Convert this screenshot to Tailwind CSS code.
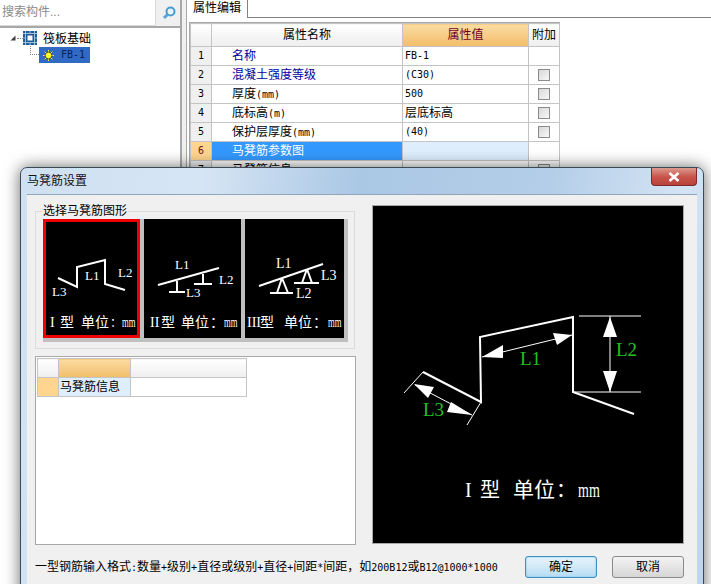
<!DOCTYPE html>
<html>
  <head>
    <meta charset="UTF-8" />
    <title>马凳筋设置</title>
    <script src="https://cdn.jsdelivr.net/npm/@tailwindcss/browser@4"></script>
  </head>
  <body class="bg-white">
    <div class="relative w-[711px] h-[584px] overflow-hidden flex bg-white text-black text-[12px] leading-[18px] font-['Liberation_Sans','Noto_Sans_CJK_SC',sans-serif]">
      <!-- left tree -->
      <aside class="w-[180px] shrink-0 flex flex-col">
        <div class="h-[28px] flex border-b-2 border-[#a8a8a8] bg-[#f0f0f0]">
          <div class="w-[156px] h-[26px] bg-white border-r border-b border-[#d8d8d8] pl-[2px] text-[12px] leading-[25px] text-[#8a8a8a]">搜索构件...</div>
          <div class="flex-1 flex items-center justify-center pl-[1px]">
            <svg width="14" height="14" viewBox="0 0 14 14">
              <circle cx="8.5" cy="5.5" r="4" fill="#e8f4fb" stroke="#4a9bd0" stroke-width="2" />
              <path d="M5.5 8.5 L2 12" stroke="#5aa5d8" stroke-width="3" />
            </svg>
          </div>
        </div>
        <div class="relative flex-1">
          <div class="flex items-center h-[18px] mt-[1px] pl-[10px]">
            <svg width="6" height="6" viewBox="0 0 6 6"><path d="M5.5 0.5 V5.5 H0.5 Z" fill="#404040" /></svg>
            <span class="w-[6px] ml-[1px] border-t border-dotted border-[#808080]"></span>
            <svg width="14" height="14" viewBox="0 0 14 14">
              <rect width="14" height="14" fill="#1f5b95" />
              <path d="M0 2.5 H14 M0 11.5 H14 M2.5 0 V14 M11.5 0 V14 M7 0 V2 M7 12 V14 M0 7 H2 M12 7 H14" stroke="#9cc0e0" stroke-width="1" />
              <rect x="4" y="4" width="6" height="6" fill="#ffffff" stroke="#1f5b95" />
            </svg>
            <span class="ml-[6px] font-['Noto_Sans_CJK_SC',sans-serif]">筏板基础</span>
          </div>
          <div class="flex items-center h-[16px] ml-[30px]">
            <span class="w-[9px] h-[9px] -mt-[9px] border-l border-b border-dotted border-[#808080]"></span>
            <div class="w-[51px] h-[16px] ml-0 bg-[#316ac5] flex items-center pl-[4px]">
              <svg width="11" height="11" viewBox="0 0 11 11">
                <path d="M5.5 0 V11 M0 5.5 H11 M1.6 1.6 L9.4 9.4 M9.4 1.6 L1.6 9.4" stroke="#f6f030" stroke-width="1" />
                <circle cx="5.5" cy="5.5" r="3.4" fill="#ffff30" stroke="#4a4a20" stroke-width="1" />
              </svg>
              <span class="ml-[7px] -mt-[1px] font-['DejaVu_Sans_Mono',monospace] text-[10px] text-[#0a1f60]">FB-1</span>
            </div>
          </div>
        </div>
      </aside>

      <!-- splitter -->
      <div class="w-[7px] shrink-0 border-l-2 border-r border-[#a8a8a8] bg-[#f0f0f0]"></div>

      <!-- property editor -->
      <main class="flex-1 min-w-0">
        <div class="h-[18px] flex">
          <div class="w-[61px] h-[18px] border-r border-[#808080] bg-white pl-[6px] leading-[16px]">属性编辑</div>
          <div class="flex-1 border-b border-[#808080]"></div>
        </div>
        <div class="ml-[2px] mt-[4px] w-[371px] border-t border-l border-[#a8a8a8]">
          <table class="table-fixed border-collapse w-[369px] leading-[14px]">
            <colgroup>
              <col class="w-[21px]" />
              <col class="w-[191px]" />
              <col class="w-[126px]" />
              <col class="w-[31px]" />
            </colgroup>
            <tr class="h-[23px] text-center">
              <td class="border border-[#c4c4c4] bg-linear-to-b from-white to-[#eeeeee]"></td>
              <td class="border border-[#c4c4c4] bg-linear-to-b from-white to-[#eeeeee]">属性名称</td>
              <td class="border border-[#c4c4c4] bg-linear-to-b from-[#fbdca2] to-[#f2bd68] text-[#6a0030]">属性值</td>
              <td class="border border-[#c4c4c4] bg-linear-to-b from-white to-[#eeeeee]">附加</td>
            </tr>
            <tr class="h-[19px]">
              <td class="border border-[#c4c4c4] bg-[#f0f0f0] text-center font-['DejaVu_Sans_Mono',monospace] text-[10px]">1</td>
              <td class="border border-[#c4c4c4] pl-[20px] text-[#0000a0]">名称</td>
              <td class="border border-[#c4c4c4] pl-[2px] font-['DejaVu_Sans_Mono',monospace] text-[10px]">FB-1</td>
              <td class="border border-[#c4c4c4]"></td>
            </tr>
            <tr class="h-[19px]">
              <td class="border border-[#c4c4c4] bg-[#f0f0f0] text-center font-['DejaVu_Sans_Mono',monospace] text-[10px]">2</td>
              <td class="border border-[#c4c4c4] pl-[20px] text-[#0000a0]">混凝土强度等级</td>
              <td class="border border-[#c4c4c4] pl-[2px] font-['DejaVu_Sans_Mono',monospace] text-[10px]">(C30)</td>
              <td class="border border-[#c4c4c4]"><div class="w-[12px] h-[12px] mx-auto border border-[#8a8a8a] bg-linear-to-br from-[#d8d8d8] to-[#f8f8f8]"></div></td>
            </tr>
            <tr class="h-[19px]">
              <td class="border border-[#c4c4c4] bg-[#f0f0f0] text-center font-['DejaVu_Sans_Mono',monospace] text-[10px]">3</td>
              <td class="border border-[#c4c4c4] pl-[20px]">厚度<span class="font-['DejaVu_Sans_Mono',monospace] text-[10px]">(mm)</span></td>
              <td class="border border-[#c4c4c4] pl-[2px] font-['DejaVu_Sans_Mono',monospace] text-[10px]">500</td>
              <td class="border border-[#c4c4c4]"><div class="w-[12px] h-[12px] mx-auto border border-[#8a8a8a] bg-linear-to-br from-[#d8d8d8] to-[#f8f8f8]"></div></td>
            </tr>
            <tr class="h-[19px]">
              <td class="border border-[#c4c4c4] bg-[#f0f0f0] text-center font-['DejaVu_Sans_Mono',monospace] text-[10px]">4</td>
              <td class="border border-[#c4c4c4] pl-[20px]">底标高<span class="font-['DejaVu_Sans_Mono',monospace] text-[10px]">(m)</span></td>
              <td class="border border-[#c4c4c4] pl-[2px]">层底标高</td>
              <td class="border border-[#c4c4c4]"><div class="w-[12px] h-[12px] mx-auto border border-[#8a8a8a] bg-linear-to-br from-[#d8d8d8] to-[#f8f8f8]"></div></td>
            </tr>
            <tr class="h-[19px]">
              <td class="border border-[#c4c4c4] bg-[#f0f0f0] text-center font-['DejaVu_Sans_Mono',monospace] text-[10px]">5</td>
              <td class="border border-[#c4c4c4] pl-[20px]">保护层厚度<span class="font-['DejaVu_Sans_Mono',monospace] text-[10px]">(mm)</span></td>
              <td class="border border-[#c4c4c4] pl-[2px] font-['DejaVu_Sans_Mono',monospace] text-[10px]">(40)</td>
              <td class="border border-[#c4c4c4]"><div class="w-[12px] h-[12px] mx-auto border border-[#8a8a8a] bg-linear-to-br from-[#d8d8d8] to-[#f8f8f8]"></div></td>
            </tr>
            <tr class="h-[19px]">
              <td class="border border-[#c4c4c4] bg-[#ffd58f] text-center text-[#7a1020] font-['DejaVu_Sans_Mono',monospace] text-[10px]">6</td>
              <td class="border border-[#c4c4c4] pl-[20px] bg-[#3399ff] text-white">马凳筋参数图</td>
              <td class="border border-[#c4c4c4] bg-[#deeefd]"></td>
              <td class="border border-[#c4c4c4]"></td>
            </tr>
            <tr class="h-[19px]">
              <td class="border border-[#c4c4c4] bg-[#f0f0f0] text-center font-['DejaVu_Sans_Mono',monospace] text-[10px]">7</td>
              <td class="border border-[#c4c4c4] pl-[20px]">马凳筋信息</td>
              <td class="border border-[#c4c4c4]"></td>
              <td class="border border-[#c4c4c4]"><div class="w-[12px] h-[12px] mx-auto border border-[#8a8a8a] bg-[#eeeeee]"></div></td>
            </tr>
          </table>
        </div>
      </main>

      <!-- dialog window -->
      <section class="absolute left-[20px] top-[167px] w-[684px] h-[440px] rounded-t-[7px] border border-[#3c4a58] bg-linear-[100deg,#cfe0f1_0%,#d6e5f4_24%,#aac7e4_45%,#b4cee8_70%,#d4e4f4_88%,#bcd4ec_100%] shadow-[0_0_16px_rgba(0,0,0,0.6)] flex flex-col px-[6px]">
        <div class="h-[26px] shrink-0 flex items-start">
          <span class="mt-[4px] text-[#111] leading-[18px]">马凳筋设置</span>
          <div class="ml-auto w-[46px] h-[18px] rounded-b-[4px] border border-t-0 border-[#7a2a2a] bg-linear-to-b from-[#dc9a90] via-[#c8564c] to-[#b8433c] flex items-center justify-center">
            <svg width="12" height="10" viewBox="0 0 12 10">
              <path d="M1.5 1 L10.5 9 M10.5 1 L1.5 9" stroke="#ffffff" stroke-width="2.6" />
            </svg>
          </div>
        </div>

        <div class="flex-1 bg-[#f0f0f0] border-t border-[#8fa6bd] flex flex-col pl-[8px]">
          <div class="flex h-[352px] pt-[10px]">
            <!-- left column -->
            <div class="w-[321px] shrink-0 flex flex-col">
              <div class="relative w-[320px] h-[138px] mt-[6px] border border-[#dcdcdc]">
                <span class="absolute left-[6px] -top-[9px] px-[1px] bg-[#f0f0f0] leading-[16px]">选择马凳筋图形</span>
                <div class="mt-[7px] ml-[7px] w-[305px] h-[123px] bg-[#c0c0c0] flex gap-[4px] items-start">
                  <div class="w-[97px] h-[119px] border-[3px] border-[#ee0000] bg-black">
                    <svg width="91" height="113" viewBox="46 221 91 113">
                      <path d="M58 277 L77 286 L77 266 L105 259 L105 283 L125 289" fill="none" stroke="#fff" stroke-width="2" />
                      <g fill="#fff" font-family="Liberation Serif, Noto Sans CJK SC, serif" font-size="13">
                        <text x="85" y="279">L1</text>
                        <text x="118" y="276">L2</text>
                        <text x="52" y="295">L3</text>
                      </g>
                      <g fill="#fff" font-family="Liberation Serif, Noto Sans CJK SC, serif" font-size="14">
                        <text x="50" y="326">I</text>
                        <text x="60" y="326">型</text>
                        <text x="81" y="326">单位</text>
                        <text x="110" y="326" font-size="12">：</text>
                        <text transform="translate(122 326) scale(0.62 1)">mm</text>
                      </g>
                    </svg>
                  </div>
                  <svg class="bg-black" width="97" height="119" viewBox="144 218 97 119">
                    <path d="M158 284 L219 267 M177 280 V291 M169 291 H185 M203 273 V283 M194 283 H212" fill="none" stroke="#fff" stroke-width="2" />
                    <g fill="#fff" font-family="Liberation Serif, Noto Sans CJK SC, serif" font-size="13">
                      <text x="175" y="268">L1</text>
                      <text x="219" y="283">L2</text>
                      <text x="186" y="296">L3</text>
                    </g>
                    <g fill="#fff" font-family="Liberation Serif, Noto Sans CJK SC, serif" font-size="14">
                      <text x="150" y="326">II</text>
                      <text x="161" y="326">型</text>
                      <text x="181" y="326">单位</text>
                      <text x="210" y="326">：</text>
                      <text transform="translate(224 326) scale(0.62 1)">mm</text>
                    </g>
                  </svg>
                  <svg class="bg-black" width="99" height="119" viewBox="245 218 99 119">
                    <path d="M259 285 L323 263 M282 277 L277 292 M282 277 L288 292 M270 292 H293 M307 268 L302 282 M307 268 L312 282 M294 282 H319" fill="none" stroke="#fff" stroke-width="2" />
                    <g fill="#fff" font-family="Liberation Serif, Noto Sans CJK SC, serif" font-size="14">
                      <text x="276" y="267">L1</text>
                      <text x="296" y="297">L2</text>
                      <text x="321" y="279">L3</text>
                      <text x="247" y="326">III</text>
                      <text x="260" y="326">型</text>
                      <text x="284" y="326">单位</text>
                      <text x="313" y="326">：</text>
                      <text transform="translate(328 326) scale(0.62 1)">mm</text>
                    </g>
                  </svg>
                </div>
              </div>

              <div class="mt-[7px] w-[321px] h-[189px] bg-white border border-[#a8a8a8] pl-[1px] pt-[1px]">
                <table class="table-fixed border-collapse w-[209px] leading-[14px]">
                  <colgroup>
                    <col class="w-[21px]" />
                    <col class="w-[72px]" />
                    <col class="w-[116px]" />
                  </colgroup>
                  <tr class="h-[19px]">
                    <td class="border border-[#c4c4c4] bg-linear-to-b from-white to-[#eeeeee]"></td>
                    <td class="border border-[#c4c4c4] bg-linear-to-b from-[#fbdca2] to-[#f2bd68]"></td>
                    <td class="border border-[#c4c4c4] bg-linear-to-b from-white to-[#eeeeee]"></td>
                  </tr>
                  <tr class="h-[19px]">
                    <td class="border border-[#c4c4c4] bg-[#ffd58f]"></td>
                    <td class="border border-[#c4c4c4] bg-[#deeefd] pl-[1px]">马凳筋信息</td>
                    <td class="border border-[#c4c4c4]"></td>
                  </tr>
                </table>
              </div>
            </div>

            <!-- large diagram -->
            <div class="ml-[16px] w-[312px] h-[339px] border border-[#a8a8a8] p-0 bg-black">
              <svg width="310" height="337" viewBox="373 206 310 337">
                <path d="M423 372 L481 402 L480 337 L573 317 L573 392 L634 414" fill="none" stroke="#fff" stroke-width="2" />
                <path d="M579 316 H641 M573 392 H641 M610 316 V392 M482 357 L572 335 M423 372 L404 393 M481 402 L467 425 M415 385 L472 415" fill="none" stroke="#fff" stroke-width="1" />
                <g fill="#fff">
                  <path d="M482 357 L503 345 L503 358 Z" />
                  <path d="M572 335 L553 333 L557 345 Z" />
                  <path d="M610 317 L603 337 L617 337 Z" />
                  <path d="M610 392 L603 371 L617 371 Z" />
                  <path d="M414 384 L434 387 L428 398 Z" />
                  <path d="M472 415 L451 402 L447 412 Z" />
                </g>
                <g fill="#22c022" font-family="Liberation Serif, serif" font-size="19">
                  <text x="520" y="365">L1</text>
                  <text x="616" y="356">L2</text>
                  <text x="423" y="416">L3</text>
                </g>
                <g fill="#fff" font-family="Liberation Serif, Noto Sans CJK SC, serif" font-size="20">
                  <text x="465" y="497">I</text>
                  <text x="480" y="497">型</text>
                  <text x="513" y="497" font-size="21">单位</text>
                  <text x="556" y="497">：</text>
                  <text transform="translate(578 497) scale(0.7 1)">mm</text>
                </g>
              </svg>
            </div>
          </div>

          <!-- footer -->
          <div class="flex items-center h-[22px] mt-[9px]">
            <span class="w-[490px] shrink-0 whitespace-nowrap">一型钢筋输入格式<span class="font-['DejaVu_Sans_Mono',monospace] text-[10px]">:</span>数量<span class="font-['DejaVu_Sans_Mono',monospace] text-[10px]">+</span>级别<span class="font-['DejaVu_Sans_Mono',monospace] text-[10px]">+</span>直径或级别<span class="font-['DejaVu_Sans_Mono',monospace] text-[10px]">+</span>直径<span class="font-['DejaVu_Sans_Mono',monospace] text-[10px]">+</span>间距<span class="font-['DejaVu_Sans_Mono',monospace] text-[10px]">*</span>间距，如<span class="font-['DejaVu_Sans_Mono',monospace] text-[10px]">200B12</span>或<span class="font-['DejaVu_Sans_Mono',monospace] text-[10px]">B12@1000*1000</span></span>
            <button class="w-[72px] h-[22px] rounded-[3px] border border-[#3c8fbf] bg-linear-to-b from-[#e8f5fc] to-[#b6dcf2] shadow-[inset_0_0_2px_#5fc0ef]">确定</button>
            <button class="ml-[15px] w-[72px] h-[22px] rounded-[3px] border border-[#8a8a8a] bg-linear-to-b from-[#f4f4f4] to-[#d6d6d6]">取消</button>
          </div>
        </div>
      </section>
    </div>
  </body>
</html>
